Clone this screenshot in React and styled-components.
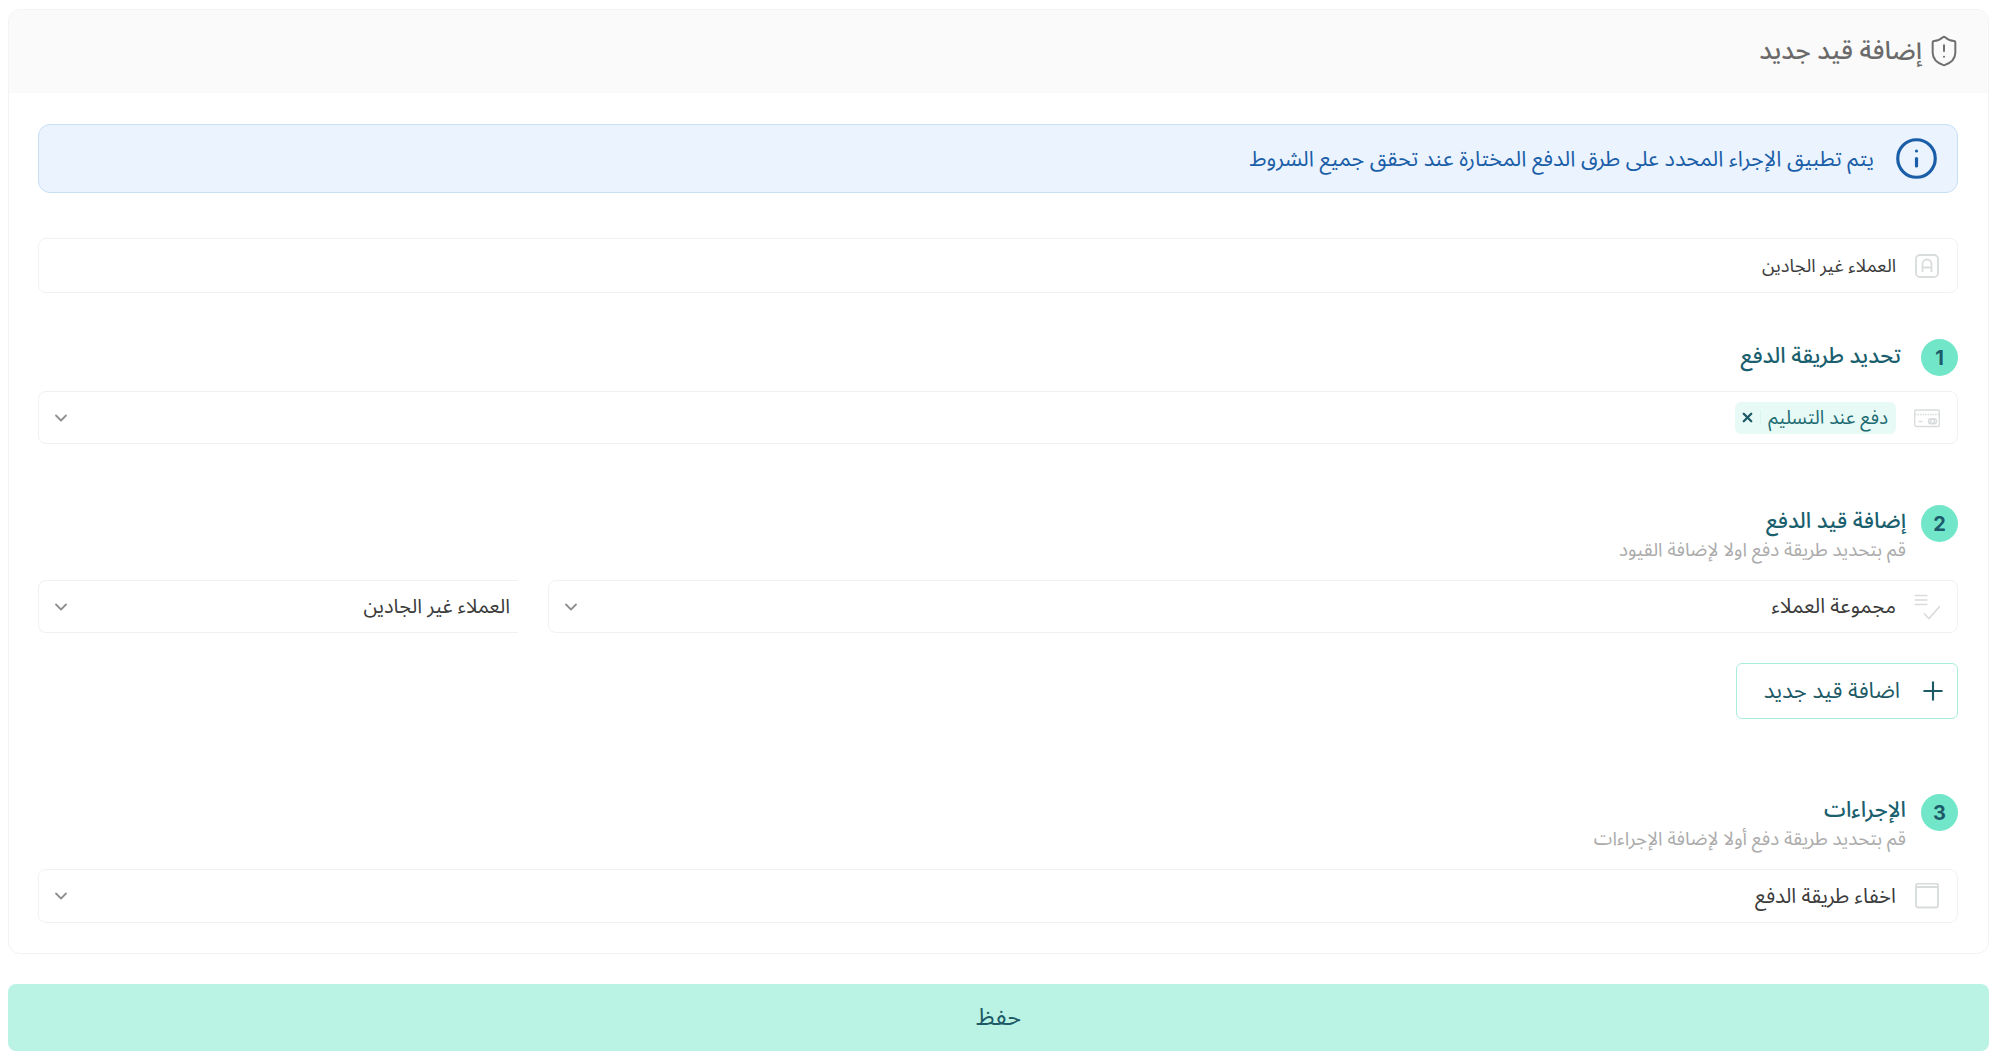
import React from 'react';
import styled, { createGlobalStyle } from 'styled-components';
import { ShieldAlert, Info, ChevronDown, X, Plus } from 'lucide-react';

const fonts = `"Noto Sans Arabic", "Noto Sans", "DejaVu Sans", sans-serif`;

const Global = createGlobalStyle`
  html, body { margin: 0; padding: 0; background: #fff; }
  * { box-sizing: border-box; }
  body { font-family: ${fonts}; }
`;

const TextIcon = () => (
  <svg width="26" height="26" viewBox="0 0 26 26" fill="none" stroke="#d9dcdc" strokeWidth="1.8">
    <rect x="2" y="2" width="22" height="22" rx="4" />
    <path d="M8.5 19v-8a4.5 4.5 0 0 1 9 0v8M8.5 14.5h9" />
  </svg>
);

const CardIcon = () => (
  <svg width="26" height="26" viewBox="0 0 26 26" fill="none" stroke="#d9dcdc" strokeWidth="1.4">
    <rect x="0.7" y="5" width="24.6" height="16.5" rx="1.5" />
    <path d="M1 9.5h24" strokeDasharray="1.5 1" />
    <path d="M4.5 16.5h4" />
    <rect x="14.5" y="13.8" width="8" height="5" rx="2.5" />
    <circle cx="18.5" cy="16.3" r="2" />
  </svg>
);

const ListCheckIcon = () => (
  <svg width="26" height="26" viewBox="0 0 26 26" fill="none" stroke="#d9dcdc" strokeWidth="1.6">
    <path d="M0.5 1.5h13M0.5 6h13M0.5 10.500h13" />
    <path d="M10 19.500l5 5L26 12" />
  </svg>
);

const BoxIcon = () => (
  <svg width="26" height="26" viewBox="0 0 26 26" fill="none" stroke="#d9dcdc" strokeWidth="1.8">
    <rect x="2" y="0.500" width="22" height="24" rx="2" />
    <path d="M2 4h22" />
  </svg>
);

const App = () => {
  return (
    <Page dir="rtl">
      <Global />
      <Card>
        <CardHeader>
          <ShieldAlert size={34} color="#6f6f6f" strokeWidth={1.4} />
          <CardTitle>إضافة قيد جديد</CardTitle>
        </CardHeader>
        <CardBody>
          <Alert>
            <Info size={45} color="#1a5ea8" strokeWidth={1.7} />
            <AlertText>يتم تطبيق الإجراء المحدد على طرق الدفع المختارة عند تحقق جميع الشروط</AlertText>
          </Alert>

          <Field $top={45} $height={55}>
            <TextIcon />
            <SmallValue>العملاء غير الجادين</SmallValue>
          </Field>

          <StepHead $top={46} $bottom={15}>
            <StepNumber>1</StepNumber>
            <StepText $inset={5} $drop={1}>
              <StepTitle>تحديد طريقة الدفع</StepTitle>
            </StepText>
          </StepHead>
          <Field $height={53}>
            <CardIcon />
            <Chip>
              <ChipLabel>دفع عند التسليم</ChipLabel>
              <ChipClose><X size={15} color="#1d5a66" strokeWidth={3.6} /></ChipClose>
            </Chip>
            <Arrow />
          </Field>

          <StepHead $top={61} $bottom={18}>
            <StepNumber>2</StepNumber>
            <StepText>
              <StepTitle>إضافة قيد الدفع</StepTitle>
              <StepSub>قم بتحديد طريقة دفع اولا لإضافة القيود</StepSub>
            </StepText>
          </StepHead>
          <SelectRow>
            <Field $height={53}>
              <ListCheckIcon />
              <Value>مجموعة العملاء</Value>
              <Arrow />
            </Field>
            <OpenField>
              <OpenValue>العملاء غير الجادين</OpenValue>
              <Arrow />
            </OpenField>
          </SelectRow>
          <AddButton>
            <Plus size={30} color="#1d5a66" strokeWidth={1.7} />
            <span>اضافة قيد جديد</span>
          </AddButton>

          <StepHead $top={75} $bottom={18}>
            <StepNumber>3</StepNumber>
            <StepText>
              <StepTitle>الإجراءات</StepTitle>
              <StepSub>قم بتحديد طريقة دفع أولا لإضافة الإجراءات</StepSub>
            </StepText>
          </StepHead>
          <Field $height={54}>
            <BoxIcon />
            <Value>اخفاء طريقة الدفع</Value>
            <Arrow />
          </Field>
        </CardBody>
      </Card>
      <SaveButton>حفظ</SaveButton>
    </Page>
  );
};

export default App;

const Arrow = () => (
  <ArrowWrap><ChevronDown size={20} color="#8f8f8f" strokeWidth={2.2} /></ArrowWrap>
);

const Page = styled.div`
  height: 1064px;
  padding: 9px 10px 0 8px;
  overflow: hidden;
`;

const Card = styled.div`
  border: 1px solid #f3f3f3;
  border-radius: 12px;
  height: 945px;
  overflow: hidden;
`;

const CardHeader = styled.div`
  height: 84px;
  background: #fafafa;
  display: flex;
  align-items: center;
  gap: 5px;
  padding: 0 27px;
  margin-top: -1px;
`;

const CardTitle = styled.h1`
  margin: 0;
  font-size: 25.6px;
  font-weight: 500;
  color: #6a6a6a;
`;

const CardBody = styled.div`
  padding: 31px 30px 0 29px;
`;

const Alert = styled.div`
  height: 69px;
  display: flex;
  align-items: center;
  gap: 20px;
  padding: 0 18px;
  background: #eaf3fe;
  border: 1px solid #c6dff7;
  border-radius: 12px;
`;

const AlertText = styled.p`
  margin: 0;
  font-size: 21.6px;
  color: #1a5ea8;
`;

const Field = styled.div`
  flex: 1;
  height: ${(p) => p.$height}px;
  margin-top: ${(p) => p.$top || 0}px;
  display: flex;
  align-items: center;
  gap: 18px;
  padding: 0 17px 0 12px;
  background: #fff;
  border: 1px solid #f1f1f1;
  border-radius: 8px;
`;

const OpenField = styled(Field)`
  flex: none;
  width: 480px;
  height: 53px;
  padding-right: 8px;
  border-right: none;
  border-radius: 8px 0 0 8px;
`;

const Value = styled.span`
  font-size: 20.5px;
  color: #3b3b3b;
`;

const OpenValue = styled(Value)`
  font-size: 20px;
`;

const SmallValue = styled(Value)`
  font-size: 18.3px;
`;

const ArrowWrap = styled.span`
  margin-right: auto;
  display: flex;
`;

const StepHead = styled.div`
  display: flex;
  align-items: flex-start;
  gap: 15px;
  margin-top: ${(p) => p.$top}px;
  margin-bottom: ${(p) => p.$bottom}px;
`;

const StepNumber = styled.div`
  width: 37px;
  height: 37px;
  flex: none;
  border-radius: 50%;
  background: #72e6c8;
  color: #1d5a6b;
  font-family: "Inter", sans-serif;
  font-size: 20px;
  font-weight: 700;
  display: flex;
  align-items: center;
  justify-content: center;
`;

const StepText = styled.div`
  padding-right: ${(p) => p.$inset || 0}px;
  padding-top: ${(p) => p.$drop || 0}px;
  display: flex;
  flex-direction: column;
`;

const StepTitle = styled.h2`
  margin: 0;
  font-size: 21.8px;
  line-height: 33px;
  font-weight: 500;
  color: #1a5f6e;
`;

const StepSub = styled.p`
  margin: 0;
  font-size: 18.8px;
  line-height: 24px;
  color: #ababab;
`;

const Chip = styled.div`
  height: 32px;
  display: flex;
  align-items: center;
  gap: 7px;
  padding: 0 8px 0 5px;
  background: #e8faf5;
  border-radius: 6px;
`;

const ChipLabel = styled.span`
  font-size: 19px;
  color: #1d6b72;
`;

const ChipClose = styled.span`
  display: flex;
  padding-right: 5px;
  border-right: 1px solid #daf5ee;
`;

const SelectRow = styled.div`
  display: flex;
  gap: 30px;
`;

const AddButton = styled.button`
  width: 222px;
  height: 56px;
  margin-top: 30px;
  display: flex;
  align-items: center;
  gap: 18px;
  padding: 0 9px;
  background: #fff;
  border: 1.5px solid #a8eedd;
  border-radius: 6px;
  font-family: ${fonts};
  font-size: 22px;
  color: #1d5a66;
`;

const SaveButton = styled.button`
  display: block;
  width: 100%;
  height: 67px;
  margin-top: 30px;
  background: #baf2e4;
  border: none;
  border-radius: 8px;
  font-family: ${fonts};
  font-size: 23.5px;
  color: #1d5a66;
`;
